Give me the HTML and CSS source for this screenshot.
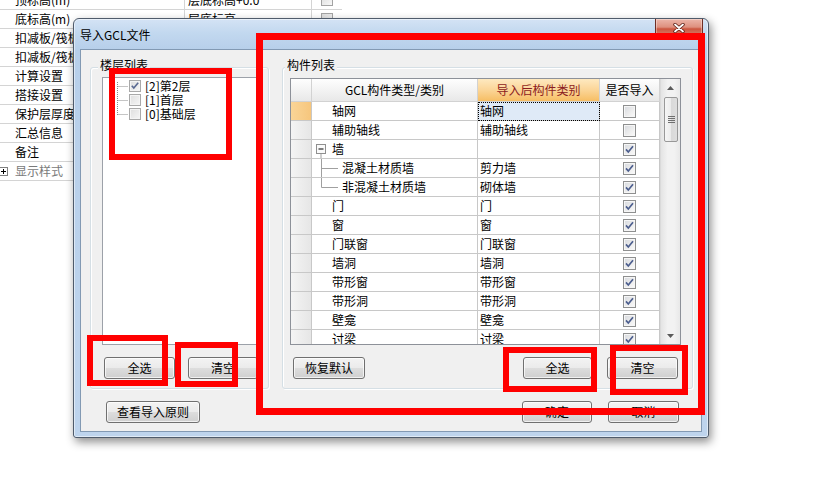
FILE: index.html
```html
<!DOCTYPE html>
<html lang="zh-CN">
<head>
<meta charset="utf-8">
<title>导入GCL文件</title>
<link rel="stylesheet" href="styles.css">
</head>
<body>
<div class="bggrid">
  <div class="bgrow"><div class="bgc1">顶标高(m)</div><div class="bgc2">层底标高+0.0</div><div class="bgc3"><span class="bgcb"></span></div></div>
  <div class="bgrow"><div class="bgc1">底标高(m)</div><div class="bgc2">层底标高</div><div class="bgc3"><span class="bgcb"></span></div></div>
  <div class="bgrow"><div class="bgc1">扣减板/筏板面筋</div><div class="bgc2"></div><div class="bgc3"></div></div>
  <div class="bgrow"><div class="bgc1">扣减板/筏板底筋</div><div class="bgc2"></div><div class="bgc3"></div></div>
  <div class="bgrow"><div class="bgc1">计算设置</div><div class="bgc2"></div><div class="bgc3"></div></div>
  <div class="bgrow"><div class="bgc1">搭接设置</div><div class="bgc2"></div><div class="bgc3"></div></div>
  <div class="bgrow"><div class="bgc1">保护层厚度</div><div class="bgc2"></div><div class="bgc3"></div></div>
  <div class="bgrow"><div class="bgc1">汇总信息</div><div class="bgc2"></div><div class="bgc3"></div></div>
  <div class="bgrow"><div class="bgc1">备注</div><div class="bgc2"></div><div class="bgc3"></div></div>
  <div class="bgrow group"><div class="bgc1"><svg class="plusbox" width="9" height="9" viewBox="0 0 9 9"><rect x="0.5" y="0.5" width="8" height="8" fill="#fff" stroke="#808080"/><path d="M2 4.5h5M4.5 2v5" stroke="#000" stroke-width="1"/></svg>显示样式</div><div class="bgc2"></div><div class="bgc3"></div></div>
</div>

<div class="dialog">
  <div class="titlebar">
    <span class="title">导入GCL文件</span>
    <span class="close"><svg width="12" height="10" viewBox="0 0 12 10"><path d="M2 1.5l8 7M10 1.5l-8 7" stroke="#5b1c12" stroke-width="3.4" stroke-linecap="round"/><path d="M2 1.5l8 7M10 1.5l-8 7" stroke="#fff" stroke-width="1.8" stroke-linecap="round"/></svg></span>
  </div>
  <div class="client">
    <div class="groups">
      <div class="gb gb-left">
        <span class="gb-title">楼层列表</span>
        <div class="listbox">
          <svg class="tree-lines" width="12" height="42" viewBox="0 0 12 42"><path d="M0.5 3V36M0.5 7.5H11M0.5 21.5H11M0.5 35.5H11" stroke="#8a8a8a" stroke-width="1" stroke-dasharray="1 1" fill="none"/></svg>
          <div class="items">
            <div class="item"><span class="lcb"><svg viewBox="0 0 10 10"><path d="M1.8 4.8l2 2.3L8.2 1.8" fill="none" stroke="#5a6a92" stroke-width="1.6"/></svg></span>[2]第2层</div>
            <div class="item"><span class="lcb"></span>[1]首层</div>
            <div class="item"><span class="lcb"></span>[0]基础层</div>
          </div>
        </div>
        <div class="btnrow">
          <button class="btn w71">全选</button>
          <button class="btn w70">清空</button>
        </div>
      </div>
      <div class="gb gb-right">
        <span class="gb-title">构件列表</span>
        <div class="table">
          <div class="tgrid">
            <div class="trow head"><div></div><div>GCL构件类型/类别</div><div class="hl">导入后构件类别</div><div>是否导入</div></div>
            <div class="trow"><div class="rh cur"></div><div class="c1">轴网</div><div class="c2 sel">轴网</div><div class="c3"><span class="cb"></span></div></div>
            <div class="trow"><div class="rh"></div><div class="c1">辅助轴线</div><div class="c2">辅助轴线</div><div class="c3"><span class="cb"></span></div></div>
            <div class="trow"><div class="rh"></div><div class="c1 tree"><svg width="20" height="18" viewBox="0 0 20 18"><rect x="4.5" y="4.5" width="9" height="9" fill="#fafafa" stroke="#8f8f8f"/><path d="M6.5 9h5" stroke="#000"/><path d="M9 14v4" stroke="#a0a0a0"/></svg>墙</div><div class="c2"></div><div class="c3"><span class="cb on"><svg viewBox="0 0 11 11"><path d="M2 5.4l2.3 2.6L9 2.2" fill="none" stroke="#4c5e8e" stroke-width="1.7"/></svg></span></div></div>
            <div class="trow"><div class="rh"></div><div class="c1 tree"><svg width="30" height="18" viewBox="0 0 30 18"><path d="M9.5 0v18M9.5 9.5H26" stroke="#a0a0a0" fill="none"/></svg>混凝土材质墙</div><div class="c2">剪力墙</div><div class="c3"><span class="cb on"><svg viewBox="0 0 11 11"><path d="M2 5.4l2.3 2.6L9 2.2" fill="none" stroke="#4c5e8e" stroke-width="1.7"/></svg></span></div></div>
            <div class="trow"><div class="rh"></div><div class="c1 tree"><svg width="30" height="18" viewBox="0 0 30 18"><path d="M9.5 0v9.5M9.5 9.5H26" stroke="#a0a0a0" fill="none"/></svg>非混凝土材质墙</div><div class="c2">砌体墙</div><div class="c3"><span class="cb on"><svg viewBox="0 0 11 11"><path d="M2 5.4l2.3 2.6L9 2.2" fill="none" stroke="#4c5e8e" stroke-width="1.7"/></svg></span></div></div>
            <div class="trow"><div class="rh"></div><div class="c1">门</div><div class="c2">门</div><div class="c3"><span class="cb on"><svg viewBox="0 0 11 11"><path d="M2 5.4l2.3 2.6L9 2.2" fill="none" stroke="#4c5e8e" stroke-width="1.7"/></svg></span></div></div>
            <div class="trow"><div class="rh"></div><div class="c1">窗</div><div class="c2">窗</div><div class="c3"><span class="cb on"><svg viewBox="0 0 11 11"><path d="M2 5.4l2.3 2.6L9 2.2" fill="none" stroke="#4c5e8e" stroke-width="1.7"/></svg></span></div></div>
            <div class="trow"><div class="rh"></div><div class="c1">门联窗</div><div class="c2">门联窗</div><div class="c3"><span class="cb on"><svg viewBox="0 0 11 11"><path d="M2 5.4l2.3 2.6L9 2.2" fill="none" stroke="#4c5e8e" stroke-width="1.7"/></svg></span></div></div>
            <div class="trow"><div class="rh"></div><div class="c1">墙洞</div><div class="c2">墙洞</div><div class="c3"><span class="cb on"><svg viewBox="0 0 11 11"><path d="M2 5.4l2.3 2.6L9 2.2" fill="none" stroke="#4c5e8e" stroke-width="1.7"/></svg></span></div></div>
            <div class="trow"><div class="rh"></div><div class="c1">带形窗</div><div class="c2">带形窗</div><div class="c3"><span class="cb on"><svg viewBox="0 0 11 11"><path d="M2 5.4l2.3 2.6L9 2.2" fill="none" stroke="#4c5e8e" stroke-width="1.7"/></svg></span></div></div>
            <div class="trow"><div class="rh"></div><div class="c1">带形洞</div><div class="c2">带形洞</div><div class="c3"><span class="cb on"><svg viewBox="0 0 11 11"><path d="M2 5.4l2.3 2.6L9 2.2" fill="none" stroke="#4c5e8e" stroke-width="1.7"/></svg></span></div></div>
            <div class="trow"><div class="rh"></div><div class="c1">壁龛</div><div class="c2">壁龛</div><div class="c3"><span class="cb on"><svg viewBox="0 0 11 11"><path d="M2 5.4l2.3 2.6L9 2.2" fill="none" stroke="#4c5e8e" stroke-width="1.7"/></svg></span></div></div>
            <div class="trow"><div class="rh"></div><div class="c1">讨梁</div><div class="c2">讨梁</div><div class="c3"><span class="cb on"><svg viewBox="0 0 11 11"><path d="M2 5.4l2.3 2.6L9 2.2" fill="none" stroke="#4c5e8e" stroke-width="1.7"/></svg></span></div></div>
          </div>
          <div class="vscroll">
            <div class="sarrow"><svg width="7" height="4" viewBox="0 0 7 4"><path d="M0 4L3.5 0L7 4Z" fill="#5a5a5a"/></svg></div>
            <div class="thumb"><svg width="7" height="7" viewBox="0 0 7 7"><path d="M0 0.5h7M0 2.5h7M0 4.5h7M0 6.5h7" stroke="#6f6f6f" stroke-width="1"/></svg></div>
            <div class="sspace"></div>
            <div class="sarrow"><svg width="7" height="4" viewBox="0 0 7 4"><path d="M0 0L3.5 4L7 0Z" fill="#5a5a5a"/></svg></div>
          </div>
        </div>
        <div class="btnrow">
          <button class="btn w72">恢复默认</button>
          <button class="btn w69 push">全选</button>
          <button class="btn w71 gap15">清空</button>
        </div>
      </div>
    </div>
    <div class="footer">
      <button class="btn w94">查看导入原则</button>
      <button class="btn w70 push">确定</button>
      <button class="btn w71 gap16">取消</button>
    </div>
  </div>
</div>

<div class="mark m1"></div>
<div class="mark m2"></div>
<div class="mark m3"></div>
<div class="mark m4"></div>
<div class="mark m5"></div>
<div class="mark m6"></div>
</body>
</html>
```

FILE: styles.css
```css
* { box-sizing: border-box; }

body {
  margin: 0;
  width: 818px;
  height: 482px;
  overflow: hidden;
  background: #fff;
  font-family: "Noto Sans CJK SC", "Noto Sans", sans-serif;
  font-size: 12px;
  color: #000;
  position: relative;
}

/* background property grid */
.bggrid { width: 342px; margin-top: -9px; }
.bgrow {
  display: flex;
  height: 19px;
  border-bottom: 1px solid #d4d4d4;
  line-height: 18px;
  white-space: nowrap;
}
.bgc1 {
  width: 185px; flex: none;
  padding-left: 15px;
  border-right: 1px solid #d4d4d4;
  overflow: hidden;
}
.bgc2 {
  width: 127px; flex: none;
  padding-left: 3px;
  border-right: 1px solid #d4d4d4;
  overflow: hidden;
}
.bgc3 { flex: 1; display: flex; align-items: center; padding-left: 9px; }
.bgcb {
  width: 12px; height: 12px;
  border: 1px solid #a3a3a3;
  background: linear-gradient(135deg, #dcdcdc, #f8f8f8);
}
.bgrow.group .bgc1 {
  padding-left: 0;
  display: flex;
  align-items: center;
  color: #7a7a7a;
}
.plusbox { margin-left: -1px; margin-right: 7px; flex: none; }

/* dialog window */
.dialog {
  position: absolute;
  left: 73px;
  top: 18px;
  width: 636px;
  height: 420px;
  border: 1px solid #4f5b6b;
  border-radius: 6px 6px 3px 3px;
  background: linear-gradient(180deg, #d4e3f5 0px, #c2d8ef 14px, #b7cfea 30px, #bed4ed 100%);
  padding: 0 6px 5px;
  display: flex;
  flex-direction: column;
  box-shadow: 2px 4px 10px rgba(0, 0, 0, 0.45), inset 0 0 0 1px rgba(255, 255, 255, 0.5);
  z-index: 1;
}
.titlebar {
  height: 30px;
  flex: none;
  display: flex;
  justify-content: space-between;
  align-items: flex-start;
  margin-right: -1px;
}
.title { padding-top: 9px; line-height: 14px; color: #000; }
.close {
  width: 48px;
  height: 19px;
  border: 1px solid #6e2d24;
  border-top: none;
  border-radius: 0 0 4px 4px;
  background: linear-gradient(#ecb6aa, #de907e 45%, #cb563f 55%, #d98777);
  display: flex;
  align-items: center;
  justify-content: center;
  box-shadow: inset 0 0 0 1px rgba(255, 255, 255, 0.35);
}

.client {
  flex: 1;
  border: 1px solid #8299b3;
  background: #f0f0f0;
  display: flex;
  flex-direction: column;
}
.groups { display: flex; gap: 13px; padding: 17px 0 0 9px; }
.gb {
  border: 1px solid #d5dfe5;
  border-radius: 3px;
  height: 322px;
  box-shadow: inset 1px 1px 0 #fff, 1px 1px 0 #fff;
}
.gb-left { width: 179px; }
.gb-right { width: 411px; }
.gb-title {
  display: block;
  width: max-content;
  line-height: 14px;
  margin-top: -10px;
  padding: 0 2px;
  background: #f0f0f0;
}
.gb-left .gb-title { margin-left: 7px; }
.gb-right .gb-title { margin-left: 2px; }

/* floor list */
.listbox {
  width: 155px;
  height: 268px;
  margin: 5px 0 0 11px;
  border: 1px solid #9ca1a9;
  background: #fff;
  padding: 1px 0 0 14px;
  display: flex;
  align-items: flex-start;
}
.tree-lines { flex: none; }
.items { display: flex; flex-direction: column; }
.item {
  height: 14px;
  display: flex;
  align-items: center;
  gap: 4px;
  line-height: 14px;
  white-space: nowrap;
}
.lcb {
  width: 12px; height: 12px; flex: none;
  border: 1px solid #a9a9a9;
  background: linear-gradient(135deg, #dedede, #f6f6f6);
  box-shadow: inset 0 0 0 1px #f4f4f4;
  display: flex;
  align-items: center;
  justify-content: center;
}
.lcb svg { width: 10px; height: 10px; }

/* buttons */
.btnrow { display: flex; margin-top: 12px; }
.gb-left .btnrow { padding-left: 13px; gap: 13px; }
.gb-right .btnrow { padding-left: 10px; padding-right: 14px; }
.btn {
  height: 22px;
  margin: 0;
  padding: 0;
  border: 1px solid #707070;
  border-radius: 3px;
  background: linear-gradient(#f3f3f3 0%, #ebebeb 48%, #dddddd 52%, #cfcfcf 100%);
  box-shadow: inset 0 0 0 1px rgba(255, 255, 255, 0.7);
  font-family: "Noto Sans CJK SC", "Noto Sans", sans-serif;
  font-size: 12px;
  line-height: 20px;
  color: #000;
  text-align: center;
  flex: none;
}
.w69 { width: 69px; }
.w70 { width: 70px; }
.w71 { width: 71px; }
.w72 { width: 72px; }
.w94 { width: 94px; }
.push { margin-left: auto; }
.gap15 { margin-left: 15px; }
.gap16 { margin-left: 16px; }

.footer { display: flex; margin-top: 12px; padding: 0 22px 0 25px; }

/* component grid */
.table {
  width: 391px;
  height: 267px;
  margin: 6px 0 0 7px;
  border: 1px solid #8d9199;
  background: #fff;
  display: flex;
  overflow: hidden;
}
.tgrid { width: 369px; flex: none; display: flex; flex-direction: column; }
.trow {
  display: grid;
  grid-template-columns: 21px 166px 122px 60px;
  height: 19px;
  flex: none;
}
.trow.head { height: 23px; }
.trow > div {
  border-right: 1px solid #c8c8c8;
  border-bottom: 1px solid #c8c8c8;
  line-height: 18px;
  white-space: nowrap;
  overflow: hidden;
}
.head > div {
  line-height: 22px;
  text-align: center;
  background: linear-gradient(#fefefe, #f3f3f3 50%, #e8e8e8);
  border-color: #d2d2d2;
}
.head > .hl {
  background: linear-gradient(#fee9c0, #fbd597 50%, #f6be64);
  color: #8c1c20;
}
.rh { background: linear-gradient(to right, #f4f4f4, #e6e6e6); }
.rh.cur { background: linear-gradient(to right, #fad597, #f6c67d); }
.c1 { padding-left: 20px; }
.c1.tree { padding-left: 0; display: flex; align-items: flex-start; }
.c1.tree svg { flex: none; }
.c2 { padding-left: 2px; }
.c2.sel {
  background: #dfeaf7;
  outline: 1px dotted #000;
  outline-offset: -1px;
}
.c3 { display: flex; align-items: center; justify-content: center; }
.cb {
  width: 13px; height: 13px;
  border: 1px solid #8e8f8f;
  background: linear-gradient(135deg, #d6d9de 0%, #eeeeee 60%, #fbfbfb 100%);
  box-shadow: inset 0 0 0 1px #f6f6f6;
  display: flex;
  align-items: center;
  justify-content: center;
}
.cb svg { width: 11px; height: 11px; }

/* scrollbar */
.vscroll {
  width: 20px;
  flex: none;
  border-left: 1px solid #dadada;
  background: linear-gradient(to right, #e4e4e4, #f2f2f2 35%, #f2f2f2 70%, #e8e8e8);
  display: flex;
  flex-direction: column;
}
.sarrow { height: 17px; flex: none; display: flex; align-items: center; justify-content: center; }
.thumb {
  height: 45px;
  flex: none;
  margin: 1px 2px 0 3px;
  border: 1px solid #989898;
  border-radius: 2px;
  background: linear-gradient(to right, #f6f6f6, #ebebeb 50%, #d9d9d9 51%, #dedede);
  display: flex;
  align-items: center;
  justify-content: center;
}
.sspace { flex: 1; }

/* red annotation rectangles */
.mark {
  position: absolute;
  border: 6px solid #ff0000;
  z-index: 2;
}
.m1 { left: 109px; top: 68px; width: 123px; height: 92px; }
.m2 { left: 256px; top: 33px; width: 449px; height: 382px; border-width: 7px; }
.m3 { left: 87px; top: 335px; width: 81px; height: 51px; }
.m4 { left: 175px; top: 342px; width: 63px; height: 45px; }
.m5 { left: 503px; top: 347px; width: 94px; height: 45px; }
.m6 { left: 610px; top: 345px; width: 78px; height: 50px; }
```
